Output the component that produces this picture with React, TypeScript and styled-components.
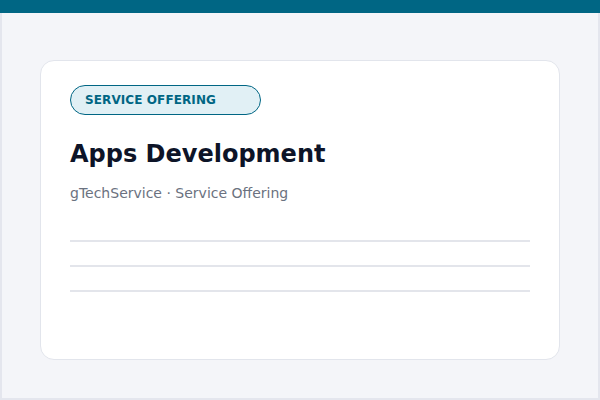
import React from 'react';
import styled, { createGlobalStyle } from 'styled-components';

const GlobalStyle = createGlobalStyle`
  html, body {
    margin: 0;
    padding: 0;
    background: #f4f5f9;
  }
  * {
    box-sizing: border-box;
  }
`;

const Page = styled.div`
  width: 600px;
  height: 400px;
  display: flex;
  flex-direction: column;
  font-family: 'DejaVu Sans', 'Noto Sans', sans-serif;
`;

const TopBar = styled.div`
  height: 13px;
  flex-shrink: 0;
  background: #006684;
`;

const Stage = styled.div`
  flex: 1;
  border: 2px solid #e4e6ee;
  border-top: none;
  background: #f4f5f9;
  padding: 47px 38px 38px;
`;

const Card = styled.div`
  height: 300px;
  background: #ffffff;
  border: 1px solid #e2e5ec;
  border-radius: 14px;
  padding: 24px 29px;
`;

const Badge = styled.div`
  display: inline-flex;
  align-items: center;
  width: 191px;
  height: 30px;
  padding: 0 14px;
  border: 1px solid #006684;
  border-radius: 15px;
  background: #e1f0f5;
  color: #006684;
  font-size: 12px;
  font-weight: 700;
  letter-spacing: 0.1px;
`;

const Title = styled.h1`
  margin: 25px 0 0;
  font-size: 24px;
  font-weight: 700;
  line-height: normal;
  color: #0d1428;
`;

const Subtitle = styled.div`
  margin-top: 17px;
  font-size: 14px;
  color: #6b7280;
`;

const Lines = styled.div`
  margin-top: 39px;
  display: flex;
  flex-direction: column;
  gap: 23px;
`;

const Line = styled.div`
  height: 2px;
  background: #e3e5eb;
`;

const App: React.FC = () => {
  return (
    <>
      <GlobalStyle />
      <Page>
        <TopBar />
        <Stage>
          <Card>
            <Badge>SERVICE OFFERING</Badge>
            <Title>Apps Development</Title>
            <Subtitle>gTechService · Service Offering</Subtitle>
            <Lines>
              <Line />
              <Line />
              <Line />
            </Lines>
          </Card>
        </Stage>
      </Page>
    </>
  );
};

export default App;
